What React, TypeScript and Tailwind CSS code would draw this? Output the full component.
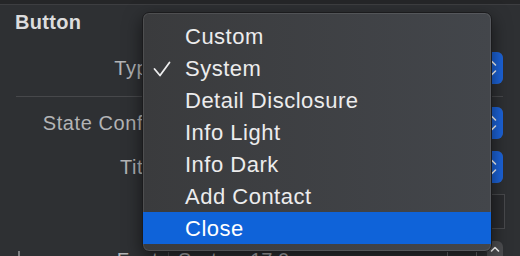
import React from "react";

const Chevrons = () => (
  <svg width="10" height="18" viewBox="0 0 10 18" fill="none" stroke="#ffffff" strokeWidth="1.6" strokeLinecap="round" strokeLinejoin="round">
    <path d="M1.5 6 L5 2.5 L8.5 6" />
    <path d="M1.5 12 L5 15.5 L8.5 12" />
  </svg>
);

const PopupRow = ({ label, mt }: { label: string; mt: string }) => (
  <div className={`flex items-center h-[32px] ${mt}`}>
    <div className="w-[160px] shrink-0 text-right text-[20px] tracking-[0.6px] text-[#b3b4b6] leading-[24px]">{label}</div>
    <div className="flex-1 ml-[8px] mr-[17px] h-full flex items-center rounded-[6px] bg-[#4a4b4e]">
      <div className="flex-1" />
      <div className="w-[22px] h-full rounded-r-[6px] bg-[#1c63d9] flex items-center justify-center">
        <Chevrons />
      </div>
    </div>
  </div>
);

const items = ["Custom", "System", "Detail Disclosure", "Info Light", "Info Dark", "Add Contact", "Close"];

export default function App() {
  return (
    <div className="relative w-[520px] h-[256px] overflow-hidden bg-[#2e3033] font-['Liberation_Sans',Arial,sans-serif]">
      <div className="h-[4px] bg-[#252628]" />
      <div className="h-px bg-[#3d3e41]" />
      <div className="mt-[5px] h-[24px] pl-[15px] text-[20px] leading-[24px] font-bold tracking-[0.3px] text-[#dcdcdd]">Button</div>
      <PopupRow label="Type" mt="mt-[18px]" />
      <div className="mt-[12px] ml-[16px] w-[487px] h-px bg-[#47484b]" />
      <PopupRow label="State Config" mt="mt-[10px]" />
      <PopupRow label="Title" mt="mt-[12px]" />
      <div className="mt-[11px] h-[35px] flex">
        <div className="w-[160px] shrink-0" />
        <div className="flex-1 ml-[8px] mr-[15px] border border-[#48494c] bg-[#2a2b2e]" />
      </div>
      <div className="mt-[12px] h-[24px] flex items-start">
        <div className="w-[110px] shrink-0 pl-[13px] pt-[10px]">
          <svg width="12" height="12" viewBox="0 0 12 12" stroke="#9a9b9d" strokeWidth="1.5">
            <path d="M6 0 V12 M0 6 H12" />
          </svg>
        </div>
        <div className="w-[48px] shrink-0 text-right pt-[7px] text-[20px] leading-[24px] tracking-[0.3px] text-[#b3b4b6]">Font</div>
        <div className="flex-1 ml-[10px] mt-[10px] h-[24px] border-l border-t border-[#505154] flex">
          <div className="flex-1 pl-[9px] text-[20px] leading-[20px] text-[#b3b4b6] -mt-[2px]">System 17.0</div>
          <div className="w-[30px] border-l border-r border-[#6a6b6e] flex justify-center pt-[3px]">
            <span className="text-[13px] leading-[13px] text-[#a0a1a3]">T</span>
          </div>
          <div className="w-[10px]" />
        </div>
        <div className="w-[16px] mr-[17px] h-[24px] rounded-t-[6px] bg-[#4c4d50] flex justify-center pt-[5px]">
          <svg width="10" height="6" viewBox="0 0 10 6" fill="none" stroke="#ffffff" strokeWidth="1.6" strokeLinecap="round" strokeLinejoin="round">
            <path d="M1.5 5 L5 1.5 L8.5 5" />
          </svg>
        </div>
      </div>

      <div className="absolute left-[142px] top-[12px] w-[350px] h-[240px] rounded-[7px] border border-[#1b1b1d] bg-gradient-to-r from-[#3a3b3d] to-[#43464b] shadow-[0_6px_18px_rgba(0,0,0,0.55),inset_0_0_0_1px_rgba(255,255,255,0.1)] overflow-hidden py-[7px]">
        {items.map((it) => (
          <div
            key={it}
            className={`relative h-[32px] flex items-center pt-[2px] pl-[42px] text-[22px] leading-[30px] tracking-[0.5px] ${it === "Close" ? "bg-[#0f63d9] text-white" : "text-[#ececed]"}`}
          >
            {it === "System" && (
              <svg className="absolute left-[10px] top-[9px]" width="18" height="16" viewBox="0 0 18 16" fill="none" stroke="#ececed" strokeWidth="1.8" strokeLinecap="round" strokeLinejoin="round">
                <path d="M1.5 8 L7 14.5 L16.5 1.5" />
              </svg>
            )}
            {it}
          </div>
        ))}
      </div>
    </div>
  );
}
